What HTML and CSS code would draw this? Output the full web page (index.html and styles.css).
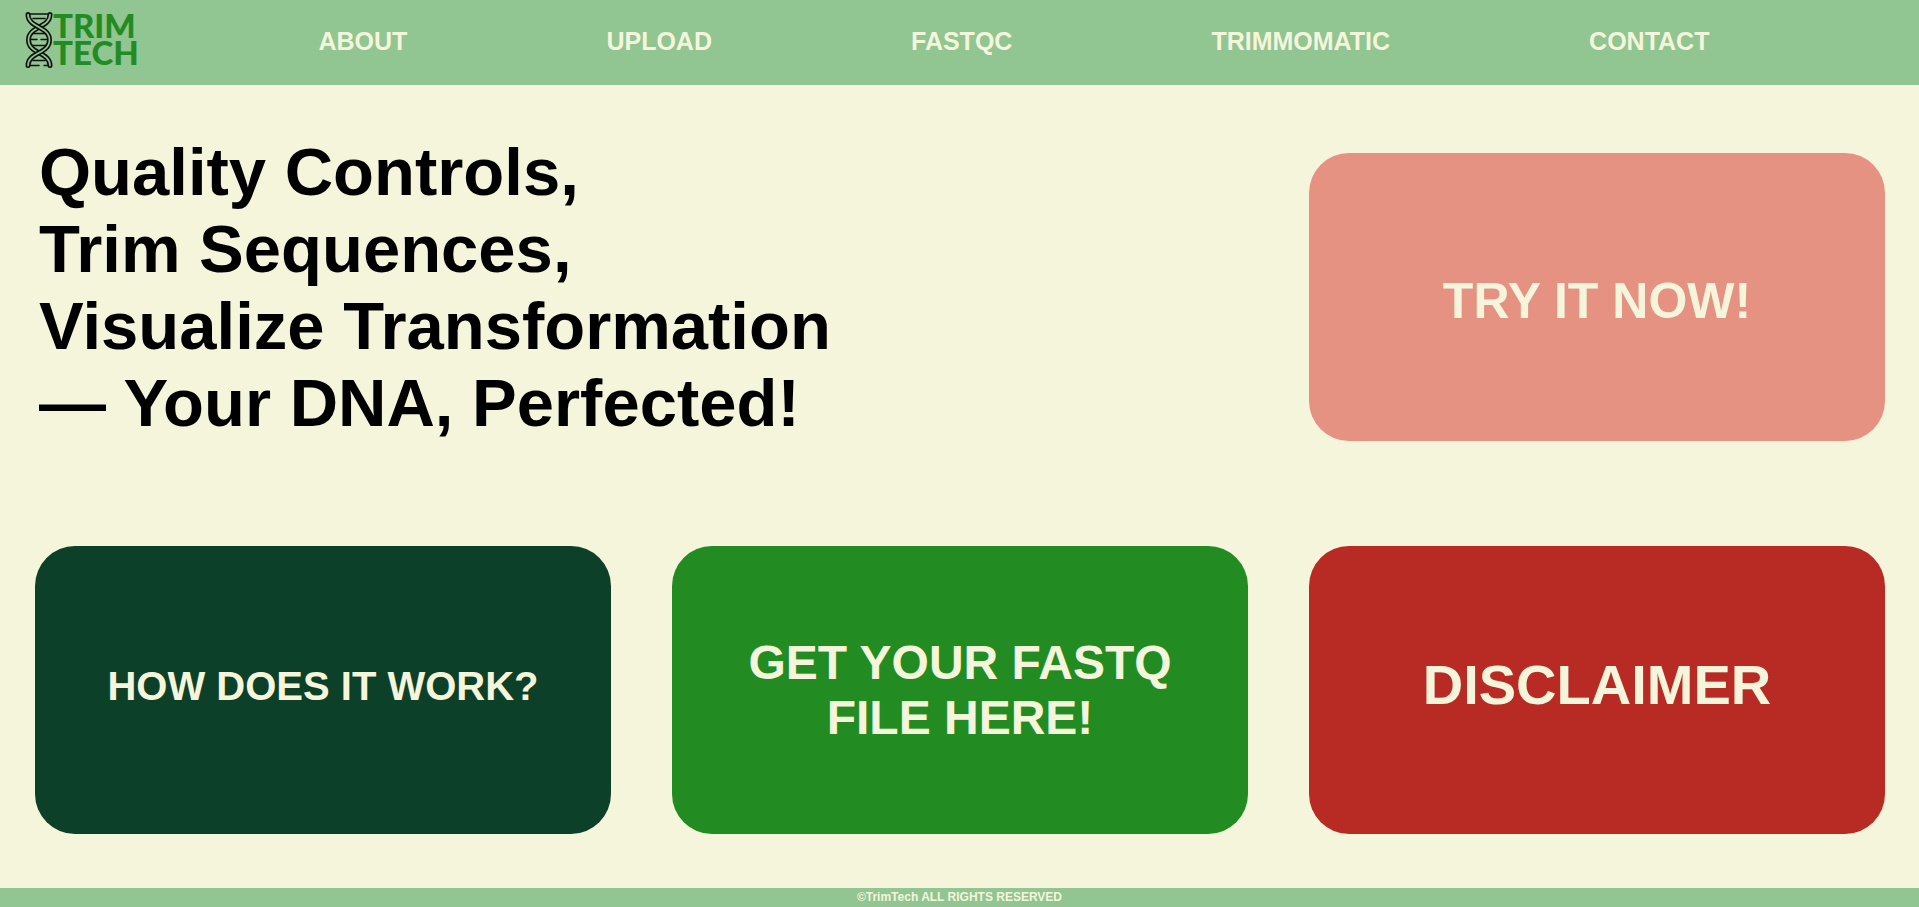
FILE: index.html
```html
<!DOCTYPE html>
<html lang="en">
<head>
<meta charset="utf-8">
<title>TrimTech</title>
<link rel="stylesheet" href="styles.css">
</head>
<body>
<header class="site-header">
  <a class="logo" href="#" aria-label="TrimTech home">
    <svg class="logo-mark" viewBox="0 0 28 56" width="28" height="56" aria-hidden="true">
      <g fill="none" stroke-linecap="round" stroke-linejoin="round">
        <g stroke="#111" stroke-width="1.5">
          <path d="M5 2H23M8 6.500H20M7 21.500H21M5 27.500H12M16 27.500H23M7 33.500H21M8 48.500H20M5 53.500H14M19 53.500H23"/>
        </g>
        <path d="M25 2.500C25 16 3.500 14 3.500 28S25 40 25 53.500" stroke="#111" stroke-width="5"/>
        <path d="M25 2.500C25 16 3.500 14 3.500 28S25 40 25 53.500" stroke="#91c591" stroke-width="1.700"/>
        <path d="M3 2.500C3 16 24.500 14 24.500 28S3 40 3 53.500" stroke="#111" stroke-width="5"/>
        <path d="M3 2.500C3 16 24.500 14 24.500 28S3 40 3 53.500" stroke="#91c591" stroke-width="1.700"/>
      </g>
    </svg>
    <span class="logo-text">TRIM<br>TECH</span>
  </a>
  <nav class="nav">
    <a href="#">ABOUT</a>
    <a href="#">UPLOAD</a>
    <a href="#">FASTQC</a>
    <a href="#">TRIMMOMATIC</a>
    <a href="#">CONTACT</a>
  </nav>
</header>
<main class="content">
  <h1 class="headline">Quality Controls,<br>Trim Sequences,<br>Visualize Transformation<br>— Your DNA, Perfected!</h1>
  <a class="card card-try" href="#">TRY IT NOW!</a>
  <a class="card card-how" href="#">HOW DOES IT WORK?</a>
  <a class="card card-file" href="#">GET YOUR FASTQ FILE HERE!</a>
  <a class="card card-disclaimer" href="#">DISCLAIMER</a>
</main>
<footer class="site-footer">©TrimTech ALL RIGHTS RESERVED</footer>
</body>
</html>
```
FILE: styles.css
```css
* {
  box-sizing: border-box;
}

body {
  margin: 0;
  min-height: 100vh;
  display: flex;
  flex-direction: column;
  background: #f5f5dc;
  color: #000;
  font-family: Arial, "Liberation Sans", sans-serif;
  font-weight: bold;
}

a {
  color: #f5f5dc;
  text-decoration: none;
}

.site-header {
  display: flex;
  align-items: flex-start;
  padding: 12px 110px 15px 25px;
  background: #91c591;
}

.logo {
  display: flex;
  width: 194px;
  height: 58px;
}

.logo-text {
  color: #228b22;
  font-family: Lato, sans-serif;
  font-size: 33px;
  font-weight: 900;
  line-height: 27px;
}

.nav {
  flex: 1;
  display: flex;
  justify-content: space-around;
  font-size: 25px;
  line-height: 58px;
}

.content {
  display: grid;
  grid-template-columns: repeat(3, 1fr);
  align-items: end;
  gap: 105px 61px;
  padding: 48px 34px 54px 35px;
}

.headline {
  grid-column: span 2;
  margin: 0 0 0 4px;
  font-size: 67px;
  line-height: 77px;
}

.card {
  display: flex;
  align-items: center;
  justify-content: center;
  width: 100%;
  aspect-ratio: 2;
  padding: 0 60px;
  border-radius: 40px;
  text-align: center;
}

.card-try {
  padding-top: 8px;
  background: #e69282;
  font-size: 50px;
}

.card-how {
  padding-bottom: 8px;
  background: #0d4029;
  font-size: 40px;
}

.card-file {
  background: #228b22;
  font-size: 48px;
}

.card-disclaimer {
  padding-bottom: 12px;
  background: #b82b25;
  font-size: 56px;
}

.site-footer {
  margin-top: auto;
  background: #91c591;
  color: #f5f5dc;
  font-size: 12px;
  line-height: 19px;
  text-align: center;
}
```
